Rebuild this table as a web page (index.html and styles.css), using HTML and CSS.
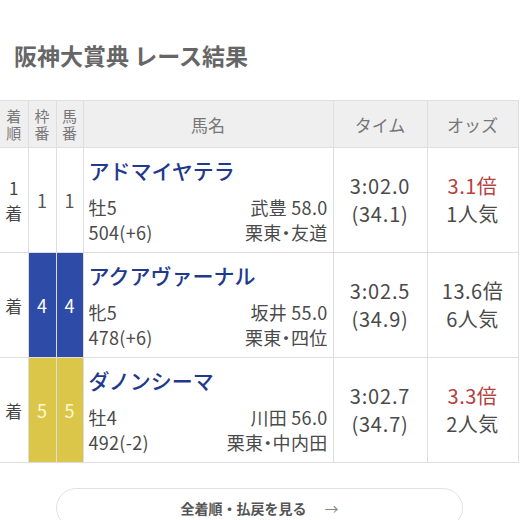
FILE: index.html
```html
<!DOCTYPE html>
<html lang="ja">
<head>
<meta charset="utf-8">
<link rel="stylesheet" href="styles.css">
</head>
<body>
<h1 class="title">阪神大賞典 レース結果</h1>
<table class="result">
  <colgroup>
    <col class="c-rank"><col class="c-waku"><col class="c-uma"><col class="c-name"><col class="c-time"><col class="c-odds">
  </colgroup>
  <thead>
    <tr>
      <th class="stack">着<br>順</th>
      <th class="stack">枠<br>番</th>
      <th class="stack">馬<br>番</th>
      <th>馬名</th>
      <th>タイム</th>
      <th>オッズ</th>
    </tr>
  </thead>
  <tbody>
    <tr>
      <td class="rank">1<br>着</td>
      <td class="num">1</td>
      <td class="num">1</td>
      <td class="horse">
        <div class="hname">アドマイヤテラ</div>
        <div class="sub"><span>牡5</span><span>武豊 58.0</span></div>
        <div class="sub"><span>504(+6)</span><span>栗東・友道</span></div>
      </td>
      <td class="time">3:02.0<br>(34.1)</td>
      <td class="odds"><span class="hot">3.1倍</span><br>1人気</td>
    </tr>
    <tr>
      <td class="rank">着</td>
      <td class="num waku-blue">4</td>
      <td class="num waku-blue">4</td>
      <td class="horse">
        <div class="hname">アクアヴァーナル</div>
        <div class="sub"><span>牝5</span><span>坂井 55.0</span></div>
        <div class="sub"><span>478(+6)</span><span>栗東・四位</span></div>
      </td>
      <td class="time">3:02.5<br>(34.9)</td>
      <td class="odds">13.6倍<br>6人気</td>
    </tr>
    <tr>
      <td class="rank">着</td>
      <td class="num waku-yellow">5</td>
      <td class="num waku-yellow">5</td>
      <td class="horse">
        <div class="hname">ダノンシーマ</div>
        <div class="sub"><span>牡4</span><span>川田 56.0</span></div>
        <div class="sub"><span>492(-2)</span><span>栗東・中内田</span></div>
      </td>
      <td class="time">3:02.7<br>(34.7)</td>
      <td class="odds"><span class="hot">3.3倍</span><br>2人気</td>
    </tr>
  </tbody>
</table>
<div class="more-wrap">
  <a class="more" href="#">全着順・払戻を見る<span class="arrow">→</span></a>
</div>
</body>
</html>
```
FILE: styles.css
```css
html, body {
  margin: 0;
  padding: 0;
  background: #fff;
}
body {
  font-family: "Noto Sans CJK JP", "Noto Sans", sans-serif;
  color: #444;
  width: 520px;
  overflow: hidden;
}
.title {
  margin: 0 0 30px 0;
  padding: 40px 0 0 14px;
  font-size: 23px;
  line-height: 30px;
  font-weight: 700;
  color: #666;
}
.result {
  width: 518px;
  border-collapse: collapse;
  table-layout: fixed;
}
.c-rank { width: 28px; }
.c-waku { width: 28px; }
.c-uma { width: 27px; }
.c-name { width: 250px; }
.c-time { width: 94px; }
.c-odds { width: 91px; }
.result th, .result td {
  border: 1.5px solid #dedede;
  padding: 0;
}
.result th:first-child, .result td:first-child {
  border-left: none;
}
.result th {
  background: #efefef;
  color: #777;
  font-weight: 400;
  font-size: 17px;
  height: 46px;
  text-align: center;
}
.result th.stack {
  font-size: 15px;
  line-height: 17px;
  color: #777;
}
.result td {
  vertical-align: middle;
  text-align: center;
}
.result td.rank {
  font-size: 17px;
  line-height: 25px;
  color: #444;
}
.result td.num {
  font-size: 18px;
  color: #555;
}
.result td.waku-blue {
  background: #2d4ba7;
  color: #fff;
}
.result td.waku-yellow {
  background: #dcc649;
  color: #fdf8d8;
}
.result td.horse {
  text-align: left;
  padding: 8px 5px 7px 5px;
}
.hname {
  font-size: 21px;
  line-height: 28px;
  font-weight: 500;
  color: #1f3a8c;
  margin-bottom: 11px;
  white-space: nowrap;
}
.sub {
  display: flex;
  justify-content: space-between;
  font-size: 18px;
  line-height: 25px;
  color: #4a4a4a;
  letter-spacing: 0.3px;
  white-space: nowrap;
  font-feature-settings: "palt";
}
.result td.time {
  font-size: 20px;
  line-height: 28px;
  color: #4a4a4a;
  letter-spacing: 0.8px;
}
.result td.odds {
  font-size: 20px;
  line-height: 28px;
  color: #4a4a4a;
  letter-spacing: 0.5px;
}
.hot {
  color: #b5423f;
}
.more-wrap {
  display: flex;
  justify-content: flex-start;
  padding: 25px 0 0 56px;
}
.more {
  display: flex;
  align-items: center;
  justify-content: center;
  box-sizing: border-box;
  width: 407px;
  height: 40px;
  border: 1.5px solid #e2e2e2;
  border-radius: 20px;
  text-decoration: none;
  color: #555;
  font-size: 14px;
  font-weight: 700;
}
.arrow {
  margin-left: 18px;
  font-weight: 400;
  color: #888;
}
```
